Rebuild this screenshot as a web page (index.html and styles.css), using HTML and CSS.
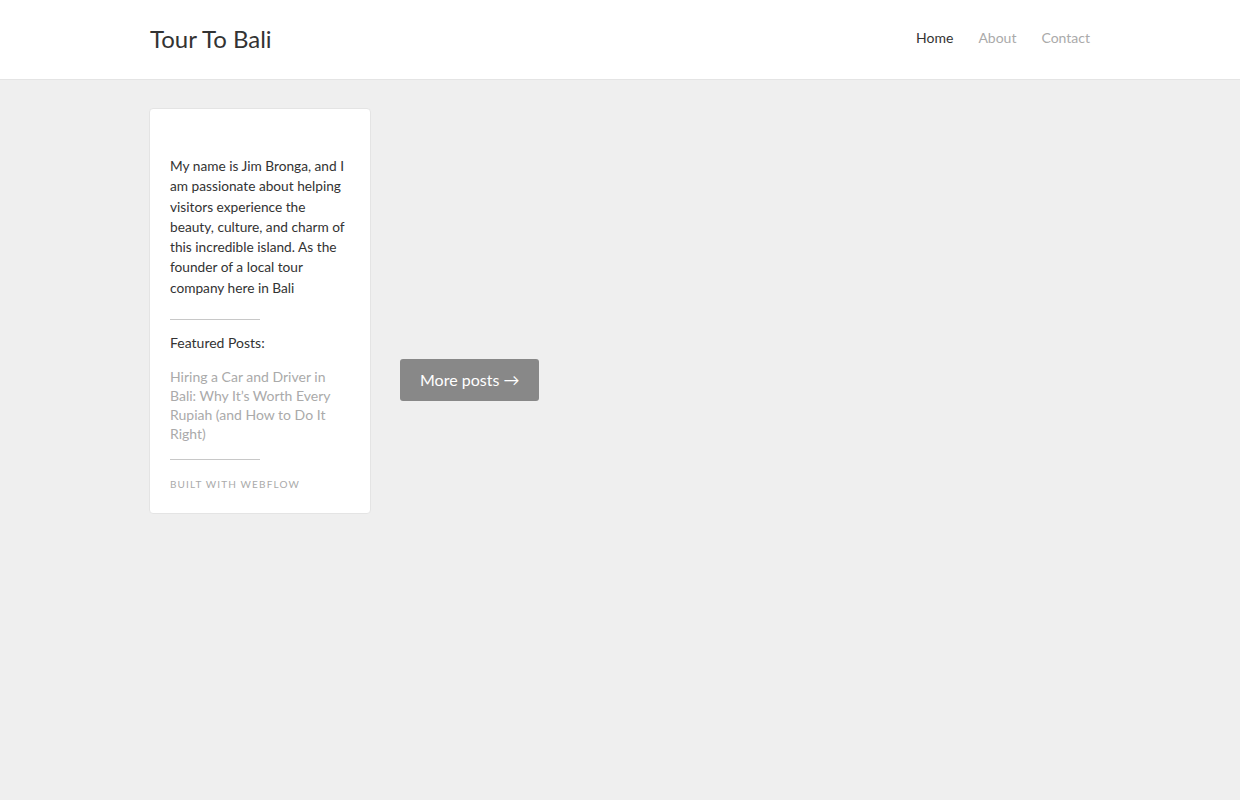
FILE: index.html
```html
<!doctype html>
<html>

<head>
    <meta name="viewport" content="width=device-width,initial-scale=1.0">
    <meta charset="utf-8" />
    <title>Tour To Bali</title>
    <link rel="stylesheet" href="styles.css">
</head>

<body>
    <div class="navbar">
        <div class="container navbar__inner">
            <a class="brand" href="#">Tour To Bali</a>
            <nav class="nav">
                <a class="nav__link nav__link--current" href="#">Home</a>
                <a class="nav__link" href="#">About</a>
                <a class="nav__link" href="#">Contact</a>
            </nav>
        </div>
    </div>
    <div class="container content">
        <div class="sidebar">
            <p class="bio">My name is Jim Bronga, and I am passionate about helping visitors experience the beauty, culture, and charm of this incredible island. As the founder of a local tour company here in Bali</p>
            <div class="divider"></div>
            <div class="featured">Featured Posts:</div>
            <a class="featured__link" href="#">Hiring a Car and Driver in Bali: Why It’s Worth Every Rupiah (and How to Do It Right)</a>
            <div class="divider divider--bottom"></div>
            <a class="built" href="#">Built with Webflow</a>
        </div>
        <div class="main">
            <a class="button" href="#">More posts →</a>
        </div>
    </div>
</body>

</html>
```
FILE: styles.css
```css
body {
    margin: 0;
    background: #efefef;
    font-family: Lato, "Open Sans", sans-serif;
    color: #333;
}

a {
    text-decoration: none;
}

.container {
    width: 940px;
    margin: 0 auto;
}

.navbar {
    background: #fff;
    border-bottom: 1px solid #e4e4e4;
}

.navbar__inner {
    display: flex;
    align-items: center;
    justify-content: space-between;
    height: 79px;
}

.brand {
    font-size: 24px;
    color: #333;
    margin-top: -3px;
}

.nav {
    display: flex;
    gap: 25px;
}

.nav__link {
    font-size: 14px;
    color: #aaa;
    margin-top: -4px;
}

.nav__link--current {
    color: #333;
}

.content {
    display: flex;
    gap: 29px;
    padding-top: 28px;
    align-items: flex-start;
}

.sidebar {
    width: 180px;
    margin-left: -1px;
    padding: 47px 20px 22px;
    background: #fff;
    border: 1px solid #e4e4e4;
    border-radius: 4px;
}

.bio {
    margin: 0;
    font-size: 13.7px;
    line-height: 20.3px;
}

.divider {
    width: 90px;
    height: 1px;
    background: #c8c8c8;
    margin: 21px 0 13px;
}

.divider--bottom {
    margin: 16px 0 17px;
}

.featured {
    font-size: 14px;
    line-height: 20px;
    margin-bottom: 14px;
}

.featured__link {
    display: block;
    font-size: 14px;
    line-height: 19px;
    color: #aaa;
}

.built {
    display: block;
    font-size: 10px;
    letter-spacing: 1.15px;
    text-transform: uppercase;
    color: #aaa;
    line-height: 14px;
}

.main {
    padding-top: 251px;
}

.button {
    display: inline-block;
    background: #888;
    color: #fff;
    font-size: 16px;
    line-height: 20px;
    padding: 11px 20px;
    border-radius: 3px;
}
```
